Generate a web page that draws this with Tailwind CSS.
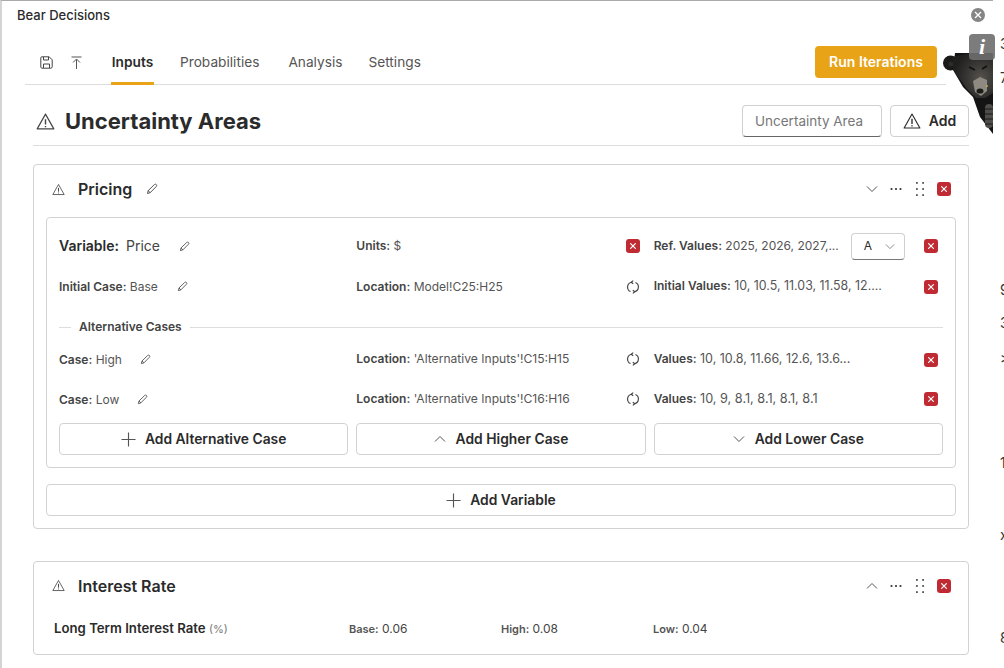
<!DOCTYPE html>
<html lang="en">
<head>
    <meta charset="UTF-8">
    <title>Bear Decisions</title>
    <script src="https://cdn.jsdelivr.net/npm/@tailwindcss/browser@4"></script>
</head>
<body class="relative h-[668px] overflow-hidden bg-white font-['Inter',sans-serif] text-[#2b2b2b]">

<!-- shared icons -->
<svg class="hidden">
    <symbol id="warn" viewBox="0 0 16 16" fill="none" stroke="currentColor" stroke-width="1">
        <path d="M8 1.8 15 14.2H1Z" stroke-linejoin="round"/><path d="M8 6v4.6M8 11.8v1" stroke-width="1.2"/>
    </symbol>
    <symbol id="pencil" viewBox="0 0 12 12" fill="none" stroke="currentColor" stroke-width="0.9">
        <path d="M1.5 10.5 2.2 7.6 8.4 1.6a1.2 1.2 0 0 1 1.9 1.9L4.2 9.7Z" stroke-linejoin="round"/><path d="M2.2 7.6 4.2 9.7"/>
    </symbol>
    <symbol id="cross" viewBox="0 0 14 14">
        <rect width="14" height="14" rx="3" fill="#c02a32"/><path d="M4.6 4.6 9.4 9.4M9.4 4.6 4.6 9.4" stroke="#fff" stroke-width="1.2" stroke-linecap="round"/>
    </symbol>
    <symbol id="sync" viewBox="0 0 14 14" fill="none" stroke="currentColor" stroke-width="1.150">
        <path d="M5.400 2.200A5 5 0 0 0 4.500 11.600M8.600 11.800A5 5 0 0 0 9.500 2.400"/><path d="M7.200.6 5.200 2.200 7.200 3.800M6.800 10.200 8.800 11.800 6.800 13.400" stroke-linejoin="round"/>
    </symbol>
    <symbol id="down" viewBox="0 0 12 8" fill="none" stroke="currentColor" stroke-width="1"><path d="M1 1.5 6 6.5 11 1.5"/></symbol>
    <symbol id="up" viewBox="0 0 12 8" fill="none" stroke="currentColor" stroke-width="1"><path d="M1 6.5 6 1.5 11 6.5"/></symbol>
    <symbol id="plus" viewBox="0 0 16 16" fill="none" stroke="currentColor" stroke-width="1.2"><path d="M8 .5v15M.5 8h15"/></symbol>
    <symbol id="more" viewBox="0 0 12 4" fill="currentColor"><circle cx="1.5" cy="2" r="1.1"/><circle cx="6" cy="2" r="1.1"/><circle cx="10.5" cy="2" r="1.1"/></symbol>
    <symbol id="grip" viewBox="0 0 8 14" fill="currentColor">
        <rect width="1.800" height="1.800" x="0" y="0"/><rect width="1.800" height="1.800" x="6.200" y="0"/><rect width="1.800" height="1.800" x="0" y="6.100"/><rect width="1.800" height="1.800" x="6.200" y="6.100"/><rect width="1.800" height="1.800" x="0" y="12.200"/><rect width="1.800" height="1.800" x="6.200" y="12.200"/>
    </symbol>
</svg>

<!-- window behind the dialog, only its edge shows -->
<div class="absolute left-[1000px] top-0 text-sm leading-5 text-[#333]">
    <span class="absolute top-[34px]">3</span>
    <span class="absolute top-[68px]">7</span>
    <span class="absolute top-[280px]">9</span>
    <span class="absolute top-[313px]">3</span>
    <span class="absolute top-[348px]">&gt;</span>
    <span class="absolute top-[453px]">1</span>
    <span class="absolute top-[525px]">x</span>
    <span class="absolute top-[628px]">8</span>
</div>

<div class="h-full w-[993px] border-t border-l-2 border-t-[#aaaaaa] border-l-[#d4d4d4] bg-white">
    <div class="pl-[15px] pt-[5px] text-[13px] leading-[18px] font-medium">Bear Decisions</div>

    <!-- tabs -->
    <div class="ml-[23px] mt-[22px] flex h-[39px] w-[921px] items-start border-b border-[#dddddd]">
        <svg class="ml-[15px] mt-[10px] h-[13px] w-[13px] text-[#444]" viewBox="0 0 13 13" fill="none" stroke="currentColor" stroke-width="1">
            <path d="M1.8.8h7.4l3 3v7a1.4 1.4 0 0 1-1.4 1.4H1.8A1.4 1.4 0 0 1 .8 11V1.8a1 1 0 0 1 1-1Z"/><path d="M3.5 1v3h5V1M3.5 12v-4h6v4"/>
        </svg>
        <svg class="ml-[18px] mt-[10px] h-[13px] w-[11px] text-[#555]" viewBox="0 0 11 13" fill="none" stroke="currentColor" stroke-width="1">
            <path d="M.5 1h10M5.5 13V3.5M2 6.5l3.5-3.500 3.500 3.500"/>
        </svg>
        <div class="ml-[29px] flex h-[39px] w-[43px] flex-col items-center border-b-[3px] border-[#e8a317] -mb-px">
            <span class="mt-[6px] text-[13.7px] leading-5 font-semibold">Inputs</span>
        </div>
        <span class="ml-[26px] mt-[6px] text-[13.7px] leading-5 text-[#555]">Probabilities</span>
        <span class="ml-[29px] mt-[6px] text-[13.7px] leading-5 text-[#555]">Analysis</span>
        <span class="ml-[26px] mt-[6px] text-[13.7px] leading-5 text-[#555]">Settings</span>
        <button class="ml-auto mr-[9px] h-[32px] w-[122px] rounded bg-[#e8a317] text-sm font-semibold text-white">Run Iterations</button>
    </div>

    <div class="ml-[31px] w-[936px]">
        <!-- page title -->
        <div class="flex h-[61px] items-end border-b border-[#dddddd] pb-[8px] pl-[3px]">
            <svg class="mb-[6px] h-[19px] w-[19px] text-[#444]"><use href="#warn"/></svg>
            <h1 class="ml-[10px] text-[22px] leading-[32px] font-bold">Uncertainty Areas</h1>
            <div class="ml-auto flex h-[32px] w-[140px] items-center rounded border border-[#d0d0d0] border-b-[#666666] pl-3 text-[13.5px] text-[#777]">Uncertainty Area</div>
            <button class="ml-2 flex h-[32px] w-[79px] items-center justify-center gap-[8px] rounded border border-[#d0d0d0] text-sm font-semibold">
                <svg class="h-[18px] w-[18px]"><use href="#warn"/></svg>Add
            </button>
        </div>

        <!-- pricing -->
        <section class="mt-[18px] h-[365px] rounded border border-[#d2d2d2]">
            <div class="flex h-[52px] items-center pb-[4px] pl-[18px] pr-[17px]">
                <svg class="h-[13px] w-[13px] text-[#444]"><use href="#warn"/></svg>
                <h2 class="ml-[13px] text-base font-semibold">Pricing</h2>
                <svg class="ml-[14px] h-[12px] w-[12px] text-[#444]"><use href="#pencil"/></svg>
                <svg class="ml-auto h-[8px] w-[12px] text-[#555]"><use href="#down"/></svg>
                <svg class="ml-[12px] h-[4px] w-[12px] text-[#333]"><use href="#more"/></svg>
                <svg class="ml-[14px] h-[14px] w-[8px] text-[#555]"><use href="#grip"/></svg>
                <svg class="ml-[13px] h-[14px] w-[14px]"><use href="#cross"/></svg>
            </div>

            <div class="mx-3 h-[251px] rounded border border-[#d2d2d2] px-3 text-xs text-[#555]">
                <div class="grid h-[56px] grid-cols-3 items-center gap-x-2">
                    <div class="flex items-center text-sm">
                        <b class="font-semibold text-[#2b2b2b]">Variable:</b><span class="ml-[7px] text-[#444]">Price</span>
                        <svg class="ml-[19px] h-[11px] w-[11px] text-[#444]"><use href="#pencil"/></svg>
                    </div>
                    <div class="flex items-center pr-[6px]">
                        <span><b class="font-semibold text-[#444]">Units:</b> $</span>
                        <svg class="ml-auto h-[14px] w-[14px]"><use href="#cross"/></svg>
                    </div>
                    <div class="flex items-center pr-[5px]">
                        <span class="whitespace-nowrap"><b class="font-semibold text-[#444]">Ref. Values:</b> 2025, 2026, 2027,...</span>
                        <div class="ml-[12px] flex h-[27px] w-[54px] items-center rounded border border-[#d0d0d0] border-b-[#777777] pl-3 text-[#2b2b2b]">
                            A<svg class="ml-[13px] h-[7px] w-[10px] text-[#777]"><use href="#down"/></svg>
                        </div>
                        <svg class="ml-auto h-[14px] w-[14px]"><use href="#cross"/></svg>
                    </div>
                </div>
                <div class="mt-px grid h-[23px] grid-cols-3 items-center gap-x-2">
                    <div class="flex items-center">
                        <span><b class="font-semibold text-[#444]">Initial Case:</b> Base</span>
                        <svg class="ml-[19px] h-[11px] w-[11px] text-[#444]"><use href="#pencil"/></svg>
                    </div>
                    <div class="flex items-center pr-[6px]">
                        <span><b class="font-semibold text-[#444]">Location:</b> Model!C25:H25</span>
                        <svg class="ml-auto h-[14px] w-[14px] text-[#444]"><use href="#sync"/></svg>
                    </div>
                    <div class="flex items-center pr-[5px]">
                        <span class="whitespace-nowrap"><b class="font-semibold text-[#444]">Initial Values:</b> <span class="text-[12.4px]">10, 10.5, 11.03, 11.58, 12....</span></span>
                        <svg class="ml-auto h-[14px] w-[14px]"><use href="#cross"/></svg>
                    </div>
                </div>

                <div class="mt-[20px] flex h-[18px] items-center">
                    <span class="h-px w-[12px] bg-[#dddddd]"></span>
                    <span class="px-2 font-semibold text-[#444]">Alternative Cases</span>
                    <span class="h-px flex-1 bg-[#dddddd]"></span>
                </div>

                <div class="mt-[12px] grid h-[23px] grid-cols-3 items-center gap-x-2">
                    <div class="flex items-center">
                        <span><b class="font-semibold text-[#444]">Case:</b> High</span>
                        <svg class="ml-[18px] h-[11px] w-[11px] text-[#444]"><use href="#pencil"/></svg>
                    </div>
                    <div class="flex items-center pr-[6px]">
                        <span class="whitespace-nowrap"><b class="font-semibold text-[#444]">Location:</b> <span class="text-[12.1px]">'Alternative Inputs'!C15:H15</span></span>
                        <svg class="ml-auto h-[14px] w-[14px] text-[#444]"><use href="#sync"/></svg>
                    </div>
                    <div class="flex items-center pr-[5px]">
                        <span class="whitespace-nowrap"><b class="font-semibold text-[#444]">Values:</b> <span class="text-[12.5px]">10, 10.8, 11.66, 12.6, 13.6...</span></span>
                        <svg class="ml-auto h-[14px] w-[14px]"><use href="#cross"/></svg>
                    </div>
                </div>
                <div class="mt-[17px] grid h-[23px] grid-cols-3 items-center gap-x-2">
                    <div class="flex items-center">
                        <span><b class="font-semibold text-[#444]">Case:</b> Low</span>
                        <svg class="ml-[18px] h-[11px] w-[11px] text-[#444]"><use href="#pencil"/></svg>
                    </div>
                    <div class="flex items-center pr-[6px]">
                        <span class="whitespace-nowrap"><b class="font-semibold text-[#444]">Location:</b> <span class="text-[12.1px]">'Alternative Inputs'!C16:H16</span></span>
                        <svg class="ml-auto h-[14px] w-[14px] text-[#444]"><use href="#sync"/></svg>
                    </div>
                    <div class="flex items-center pr-[5px]">
                        <span class="whitespace-nowrap"><b class="font-semibold text-[#444]">Values:</b> <span class="text-[12.7px]">10, 9, 8.1, 8.1, 8.1, 8.1</span></span>
                        <svg class="ml-auto h-[14px] w-[14px]"><use href="#cross"/></svg>
                    </div>
                </div>

                <div class="mt-[12px] grid grid-cols-3 gap-x-2 text-[13.85px] font-semibold text-[#2b2b2b]">
                    <button class="flex h-[32px] items-center justify-center gap-[9px] rounded border border-[#d2d2d2] font-semibold">
                        <svg class="h-[15px] w-[15px] text-[#555]"><use href="#plus"/></svg>Add Alternative Case
                    </button>
                    <button class="flex h-[32px] items-center justify-center gap-[10px] rounded border border-[#d2d2d2] font-semibold">
                        <svg class="h-[8px] w-[12px] text-[#555]"><use href="#up"/></svg>Add Higher Case
                    </button>
                    <button class="flex h-[32px] items-center justify-center gap-[10px] rounded border border-[#d2d2d2] font-semibold">
                        <svg class="h-[8px] w-[12px] text-[#555]"><use href="#down"/></svg>Add Lower Case
                    </button>
                </div>
            </div>

            <button class="mx-3 mt-4 flex h-[32px] w-[910px] items-center justify-center gap-[9px] rounded border border-[#d2d2d2] text-[13.85px] font-semibold">
                <svg class="h-[15px] w-[15px] text-[#555]"><use href="#plus"/></svg>Add Variable
            </button>
        </section>

        <!-- interest rate -->
        <section class="mt-[32px] h-[94px] rounded border border-[#d2d2d2]">
            <div class="flex h-[49px] items-center pb-[2px] pl-[18px] pr-[17px]">
                <svg class="h-[13px] w-[13px] text-[#444]"><use href="#warn"/></svg>
                <h2 class="ml-[13px] text-base font-semibold">Interest Rate</h2>
                <svg class="ml-auto h-[8px] w-[12px] text-[#555]"><use href="#up"/></svg>
                <svg class="ml-[12px] h-[4px] w-[12px] text-[#333]"><use href="#more"/></svg>
                <svg class="ml-[14px] h-[14px] w-[8px] text-[#555]"><use href="#grip"/></svg>
                <svg class="ml-[13px] h-[14px] w-[14px]"><use href="#cross"/></svg>
            </div>
            <div class="mt-[9px] flex h-[18px] items-center pl-5 text-xs text-[#444]">
                <span class="w-[295px] whitespace-nowrap"><b class="text-[13.2px] font-semibold text-[#2b2b2b]">Long Term Interest Rate</b> <span class="text-[11px] text-[#777]">(%)</span></span>
                <span class="w-[152px]"><b class="text-[11px] font-semibold text-[#555]">Base:</b> 0.06</span>
                <span class="w-[152px]"><b class="text-[11px] font-semibold text-[#555]">High:</b> 0.08</span>
                <span><b class="text-[11px] font-semibold text-[#555]">Low:</b> 0.04</span>
            </div>
        </section>
    </div>
</div>

<!-- close button -->
<div class="absolute left-[971px] top-[8px] flex h-[14px] w-[14px] items-center justify-center rounded-full bg-[#858585]">
    <svg class="h-[8px] w-[8px]" viewBox="0 0 8 8"><path d="M1 1 7 7M7 1 1 7" stroke="#fff" stroke-width="1.3"/></svg>
</div>

<!-- bear mascot -->
<svg class="absolute left-[943px] top-[53px] h-[81px] w-[50px]" viewBox="0 0 50 81">
    <defs>
        <radialGradient id="face" cx="0.7" cy="0.55" r="0.65">
            <stop offset="0" stop-color="#55524d"/><stop offset="0.6" stop-color="#333230"/><stop offset="1" stop-color="#1f1f1e"/>
        </radialGradient>
    </defs>
    <path d="M10 17 20 34 30 44 37 64 50 81V0H12Z" fill="#141414"/>
    <circle cx="7.500" cy="10" r="7.500" fill="#1a1a19"/>
    <circle cx="8" cy="11" r="2.500" fill="#2e2c2a"/>
    <path d="M9 4 28 0H50V40L42 45H33L24 36 11 18Z" fill="url(#face)"/>
    <path d="M30 28 37 24 44 27 44 38 38 43 32 39Z" fill="#8e8981"/>
    <ellipse cx="37" cy="38" rx="3.500" ry="2.600" fill="#1c1b1a"/>
    <circle cx="44" cy="33" r="0.900" fill="#d1b04e"/>
    <path d="M26 14 32 17M39 16 44 13" stroke="#111" stroke-width="1.800"/>
    <rect x="42" y="51" width="8" height="24" rx="4" fill="#4f4d49"/>
    <path d="M42 56H50M42 61H50M42 66H50M42 71H50" stroke="#1a1a19" stroke-width="1"/>
</svg>

<!-- info badge -->
<div class="absolute left-[969px] top-[34px] flex h-[26px] w-[26px] items-center justify-center rounded bg-[#6e6e6e]/90 font-['Liberation_Serif',serif] text-[22px] leading-none font-bold text-white italic">i</div>

</body>
</html>
